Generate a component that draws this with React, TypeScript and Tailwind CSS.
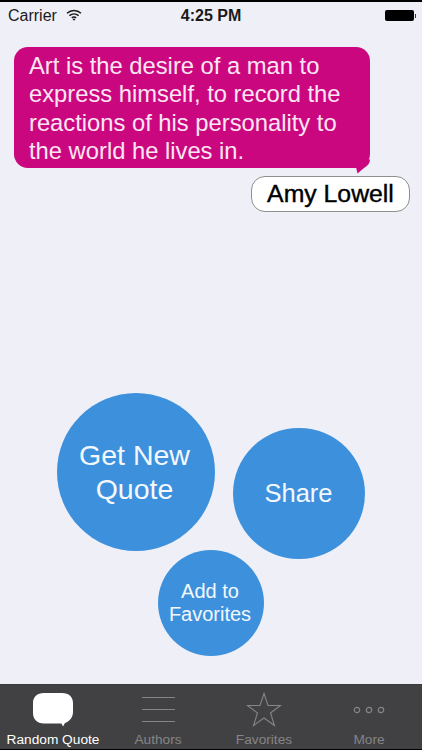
function StatusBar() {
  return (
    <div className="relative flex h-[30px] items-center border-t-2 border-black pl-[8px] pr-[6px] pb-[1px] text-[16px] text-[#1a1a1a]">
      <span>Carrier</span>
      <svg className="ml-[9px] mb-[2px]" width="16" height="12" viewBox="0 0 16 12" fill="none" stroke="#1a1a1a" strokeWidth="1.500">
        <path d="M1 4.200C5 .6 11 .6 15 4.200" />
        <path d="M3.400 6.600c2.700-2.300 6.500-2.300 9.200 0" />
        <path d="M5.800 8.800c1.300-1 3.100-1 4.400 0" />
        <path d="M8 11.800 6.600 10.200c.8-.5 2-.5 2.800 0z" fill="#1a1a1a" stroke="none" />
      </svg>
      <span className="absolute left-0 right-0 text-center font-bold">4:25 PM</span>
      <div className="ml-auto flex items-center">
        <div className="h-[11px] w-[29px] rounded-[2px] bg-black" />
        <div className="ml-[1px] h-[4px] w-[1.500px] bg-[#333]" />
      </div>
    </div>
  );
}

function CircleButton({ className, children }: { className: string; children: React.ReactNode }) {
  return (
    <button className={`flex shrink-0 items-center justify-center rounded-full bg-[#3d91dc] text-center text-[#f4f8fd] ${className}`}>
      {children}
    </button>
  );
}

function Tab({ label, active, className, children }: { label: string; active?: boolean; className: string; children: React.ReactNode }) {
  return (
    <div className={`flex flex-col items-center ${className}`}>
      <div className="flex h-[47px] items-center justify-center pt-[2px]">{children}</div>
      <span className={`whitespace-nowrap text-[13.700px] leading-[16px] ${active ? 'text-white' : 'text-[#858585]'}`}>{label}</span>
    </div>
  );
}

export default function App() {
  return (
    <div className="flex h-[750px] w-[422px] flex-col overflow-hidden bg-[#efeff7] font-['Liberation_Sans',Arial,sans-serif]">
      <StatusBar />

      {/* quote */}
      <div className="relative ml-[14px] mt-[17px] h-[121px] w-[356px] rounded-[14px] bg-[#cb0780] pl-[15px] pt-[5px] text-[23.750px] leading-[28.300px] text-[#fbe6f3]">
        <p className="whitespace-nowrap">Art is the desire of a man to</p>
        <p className="whitespace-nowrap">express himself, to record the</p>
        <p className="whitespace-nowrap">reactions of his personality to</p>
        <p className="whitespace-nowrap">the world he lives in.</p>
        <svg className="absolute left-[340px] top-[110px]" width="16" height="18" viewBox="0 0 16 18" fill="#cb0780">
          <path d="M16 2c0 5-3 7-6 9l-6.500 5.500L2 10z" />
        </svg>
      </div>
      <div className="ml-[251px] mt-[8px] flex h-[36px] w-[159px] items-center justify-center rounded-[14px] border border-[#8f8f8f] bg-white text-[24.800px] text-black [-webkit-text-stroke:0.400px_black]">
        Amy Lowell
      </div>

      {/* buttons */}
      <div className="ml-[57px] mt-[181px] flex items-start gap-[18px]">
        <CircleButton className="h-[158px] w-[158px] pr-[3px] text-[28.500px] leading-[34px]">
          Get New
          <br />
          Quote
        </CircleButton>
        <CircleButton className="mt-[35px] h-[131px] w-[132px] pr-[1px] text-[25.500px]">Share</CircleButton>
      </div>
      <CircleButton className="ml-[158px] mt-[-9px] h-[106px] w-[106px] pr-[2px] text-[20px] leading-[23px]">
        Add to
        <br />
        Favorites
      </CircleButton>

      {/* tab bar */}
      <div className="mt-[28px] flex h-[65px] shrink-0 border-t border-[#3a3a3c] bg-[#414143]">
        <Tab label="Random Quote" active className="ml-[6px] w-[94px]">
          <svg width="40" height="34" viewBox="0 0 40 34" fill="#fff">
            <path d="M11 0h18c7 0 11 4 11 10v9c0 5-3 9-8 11l-2 3.500-1.500-3H11C4 30.500 0 26 0 20V10C0 4 4 0 11 0z" />
          </svg>
        </Tab>
        <Tab label="Authors" className="ml-[34px] w-[48px]">
          <svg width="33" height="27" viewBox="0 0 33 27" stroke="#858585" strokeWidth="1">
            <path d="M0 1.500h33M0 13.500h33M0 25.500h33" />
          </svg>
        </Tab>
        <Tab label="Favorites" className="ml-[53px] w-[58px]">
          <svg width="36" height="35" viewBox="0 0 36 35" fill="none" stroke="#858585" strokeWidth="1.100">
            <path d="M18 1.500 22 13.500H34.500L24.500 21 28.500 33.500 18 26 7.500 33.500 11.500 21 1.500 13.500H14z" />
          </svg>
        </Tab>
        <Tab label="More" className="ml-[60px] w-[32px]">
          <svg width="32" height="8" viewBox="0 0 32 8" fill="none" stroke="#858585" strokeWidth="1.200">
            <circle cx="4" cy="4" r="2.700" />
            <circle cx="16" cy="4" r="2.700" />
            <circle cx="28" cy="4" r="2.700" />
          </svg>
        </Tab>
      </div>
      <div className="h-[1px] shrink-0 bg-black" />
    </div>
  );
}
